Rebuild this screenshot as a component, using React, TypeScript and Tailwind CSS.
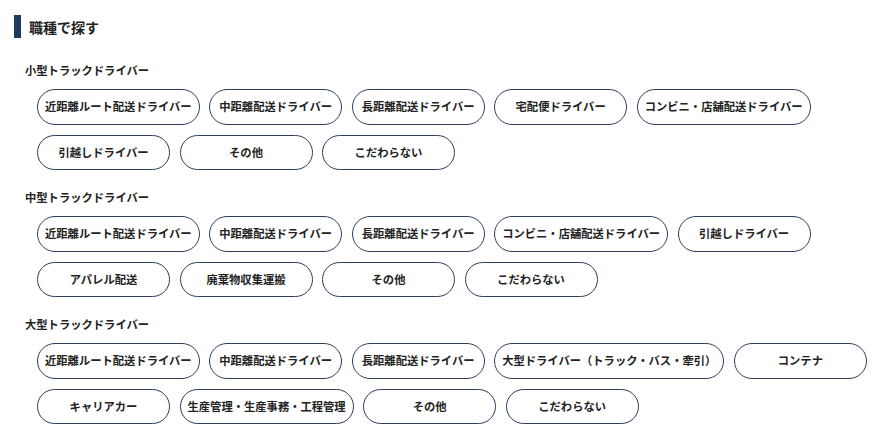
const sections = [
  {
    title: "小型トラックドライバー",
    items: [
      "近距離ルート配送ドライバー",
      "中距離配送ドライバー",
      "長距離配送ドライバー",
      "宅配便ドライバー",
      "コンビニ・店舗配送ドライバー",
      "引越しドライバー",
      "その他",
      "こだわらない",
    ],
  },
  {
    title: "中型トラックドライバー",
    items: [
      "近距離ルート配送ドライバー",
      "中距離配送ドライバー",
      "長距離配送ドライバー",
      "コンビニ・店舗配送ドライバー",
      "引越しドライバー",
      "アパレル配送",
      "廃棄物収集運搬",
      "その他",
      "こだわらない",
    ],
  },
  {
    title: "大型トラックドライバー",
    items: [
      "近距離ルート配送ドライバー",
      "中距離配送ドライバー",
      "長距離配送ドライバー",
      "大型ドライバー（トラック・バス・牽引）",
      "コンテナ",
      "キャリアカー",
      "生産管理・生産事務・工程管理",
      "その他",
      "こだわらない",
    ],
  },
];

export default function App() {
  return (
    <div
      className="min-h-screen bg-white text-[#222] pt-[15px] pl-[14px]"
      style={{ fontFamily: '"Noto Sans CJK JP", "Noto Sans", sans-serif' }}
    >
      {/* Heading */}
      <div className="flex items-center h-[23px]">
        <div className="w-[7px] h-[23px] bg-[#1f3a5f]" />
        <h2 className="ml-[8px] text-[14px] font-bold leading-none text-[#222]">職種で探す</h2>
      </div>

      <div className="mt-[26px] pl-[11px] flex flex-col gap-[21px]">
        {sections.map((section) => (
          <div key={section.title}>
            <h3 className="text-[11.3px] font-bold leading-[12px] text-[#222]">{section.title}</h3>
            <div className="mt-[13px] pl-[12px] flex flex-wrap gap-x-[9.5px] gap-y-[10px] w-[850px]">
              {section.items.map((item) => (
                <button
                  key={item}
                  className="h-[35.5px] min-w-[133px] px-[7px] rounded-full border border-[#2c3e5c] bg-white text-[11.3px] font-bold text-[#222] whitespace-nowrap flex items-center justify-center"
                >
                  {item}
                </button>
              ))}
            </div>
          </div>
        ))}
      </div>
    </div>
  );
}
